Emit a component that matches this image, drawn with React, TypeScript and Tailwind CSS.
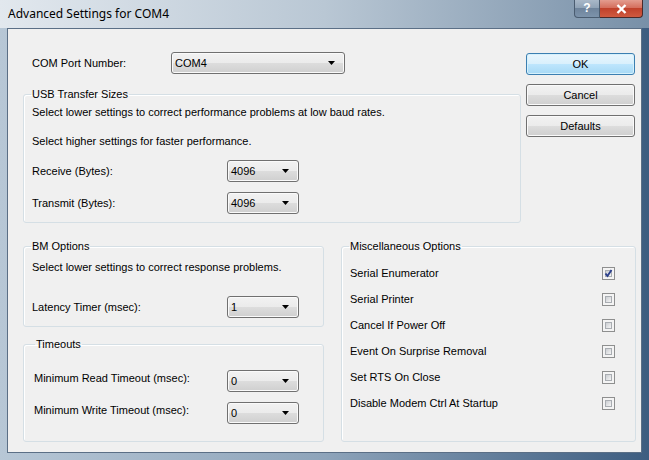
import React from 'react';

const ui = "font-['Liberation_Sans',Arial,sans-serif] text-[11px] leading-[13px] text-black";

const Combo = ({ value, w }: { value: string; w: string }) => (
  <div
    className={`${w} h-[22px] flex items-center justify-between pl-[3px] pr-[9px] rounded-[3px] border border-[#707070] bg-[linear-gradient(#f2f2f2_0%,#ebebeb_50%,#dddddd_50%,#cfcfcf_100%)] shadow-[inset_0_0_0_1px_#fafafa]`}
  >
    <span>{value}</span>
    <svg width="7" height="4" viewBox="0 0 7 4">
      <path d="M0 0h7L3.5 4z" fill="#000" />
    </svg>
  </div>
);

const Btn = ({ label, primary }: { label: string; primary?: boolean }) => (
  <div
    className={
      primary
        ? 'w-[109px] h-[22px] flex items-center justify-center rounded-[3px] border border-[#3c7fb1] bg-[linear-gradient(#eaf6fd_0%,#d9f0fc_50%,#bee6fd_50%,#a7d9f5_100%)] shadow-[inset_0_0_0_1px_#d6f1fc]'
        : 'w-[109px] h-[22px] flex items-center justify-center rounded-[3px] border border-[#707070] bg-[linear-gradient(#f2f2f2_0%,#ebebeb_50%,#dddddd_50%,#cfcfcf_100%)] shadow-[inset_0_0_0_1px_#fafafa]'
    }
  >
    {label}
  </div>
);

const Check = ({ checked }: { checked?: boolean }) => (
  <div className="w-[13px] h-[13px] border border-[#8e8f8f] bg-[#f4f4f4] p-[2px] relative">
    <div className="w-full h-full border border-[#a9adb2] bg-linear-to-br from-[#cbced2] to-[#f5f5f5]" />
    {checked && (
      <svg width="11" height="11" viewBox="0 0 11 11" className="absolute left-[0px] top-[0px]">
        <path d="M2.5 5.5 L4.5 8 L8.5 2" stroke="#2b3f8c" strokeWidth="1.9" fill="none" />
      </svg>
    )}
  </div>
);

const Group = ({ title, className, children }: { title: string; className: string; children: React.ReactNode }) => (
  <fieldset className={`border border-[#d5dfe5] rounded-[3px] shadow-[inset_1px_1px_0_#fff] ${className}`}>
    <legend className="-ml-[1px] px-[1px]">{title}</legend>
    {children}
  </fieldset>
);

const FieldRow = ({ label, value, className }: { label: string; value: string; className: string }) => (
  <div className={`flex items-center h-[22px] ${className}`}>
    <span className="w-[195px]">{label}</span>
    <Combo value={value} w="w-[72px]" />
  </div>
);

const misc = [
  ['Serial Enumerator', true],
  ['Serial Printer', false],
  ['Cancel If Power Off', false],
  ['Event On Surprise Removal', false],
  ['Set RTS On Close', false],
  ['Disable Modem Ctrl At Startup', false],
] as const;

export default function App() {
  return (
    <div className={`w-[649px] h-[460px] flex flex-col overflow-hidden bg-linear-to-r from-[#b7c7d6] via-[#8ea4ba] to-[#3d5d80] ${ui}`}>
      {/* title bar */}
      <div className="h-[28px] flex items-start bg-linear-to-r from-[#e2e8ee] via-[#b9c7d4] to-[#7890a8]">
        <span className="pl-[8px] pt-[6px] font-['Noto_Sans',sans-serif] text-[12px] leading-[16px] text-black">
          Advanced Settings for COM4
        </span>
        <div className="ml-auto mr-[6px] flex">
          <div className="w-[26px] h-[18px] flex items-center justify-center rounded-bl-[4px] border border-t-0 border-[#4a5c70] bg-[linear-gradient(#a9b8c8_0%,#8ea1b5_50%,#6f849c_50%,#7c93ab_100%)] text-white font-bold text-[12px]">
            ?
          </div>
          <div className="w-[43px] h-[18px] flex items-center justify-center rounded-br-[4px] border border-t-0 border-l-0 border-[#4a2a2a] bg-[linear-gradient(#e39c8f_0%,#d36a58_50%,#c0412b_50%,#d05a40_100%)]">
            <svg width="11" height="10" viewBox="0 0 11 10">
              <path d="M1.5 1 L9.5 9 M9.5 1 L1.5 9" stroke="#fff" strokeWidth="2.4" />
            </svg>
          </div>
        </div>
      </div>

      {/* client area */}
      <div className="mx-[7px] mb-[7px] flex-1 border border-[#5b6f86] bg-[#f0f0f0] pl-[15px] pt-[23px]">
        <div className="flex">
          <div className="w-[498px] flex flex-col">
            <div className="flex items-center h-[22px] pl-[9px]">
              <span className="w-[139px]">COM Port Number:</span>
              <Combo value="COM4" w="w-[174px]" />
            </div>
            <Group title="USB Transfer Sizes" className="mt-[14px] h-[135px] pl-[8px]">
              <p className="mt-[5px]">Select lower settings to correct performance problems at low baud rates.</p>
              <p className="mt-[16px]">Select higher settings for faster performance.</p>
              <FieldRow label="Receive (Bytes):" value="4096" className="mt-[12px]" />
              <FieldRow label="Transmit (Bytes):" value="4096" className="mt-[10px]" />
            </Group>
          </div>
          <div className="ml-[5px] mt-[1px] flex flex-col gap-[9px]">
            <Btn label="OK" primary />
            <Btn label="Cancel" />
            <Btn label="Defaults" />
          </div>
        </div>

        <div className="flex mt-[17px]">
          <div className="w-[301px] flex flex-col">
            <Group title="BM Options" className="h-[87px] pl-[8px]">
              <p className="mt-[8px]">Select lower settings to correct response problems.</p>
              <FieldRow label="Latency Timer (msec):" value="1" className="mt-[22px]" />
            </Group>
            <Group title="Timeouts" className="mt-[11px] h-[104px] pl-[10px] [&>legend]:ml-[1px]">
              <FieldRow label="Minimum Read Timeout (msec):" value="0" className="mt-[19px] [&>span]:w-[193px] [&>span]:mb-[5px]" />
              <FieldRow label="Minimum Write Timeout (msec):" value="0" className="mt-[10px] [&>span]:w-[193px] [&>span]:mb-[6px]" />
            </Group>
          </div>
          <Group title="Miscellaneous Options" className="ml-[17px] w-[295px] h-[202px] pl-[8px] pr-[20px]">
            <div className="flex flex-col mt-[14px] gap-[13px]">
              {misc.map(([label, on]) => (
                <div key={label} className="flex items-center justify-between h-[13px]">
                  <span>{label}</span>
                  <Check checked={on} />
                </div>
              ))}
            </div>
          </Group>
        </div>
      </div>
    </div>
  );
}
